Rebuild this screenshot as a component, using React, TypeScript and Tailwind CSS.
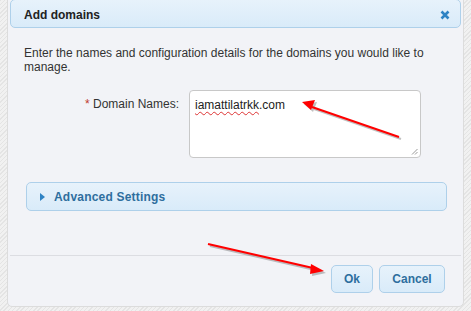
export default function App() {
  const font = { fontFamily: '"Liberation Sans", Arial, sans-serif' };
  return (
    <div
      className="relative w-[471px] h-[311px] overflow-hidden bg-[repeating-linear-gradient(135deg,#e4e4e4_0px,#e4e4e4_1px,#f1f1f1_1px,#f1f1f1_3px)]"
      style={font}
    >
      <div className="ml-[7px] mt-[-4px] w-[457px] h-[311px] flex flex-col rounded-b-[5px] border border-[#dcdcdc] bg-[#f2f3f7] p-[2px]">
        {/* title bar */}
        <div className="h-[29px] flex items-center justify-between rounded-[5px] border border-[#aed0ea] bg-gradient-to-b from-[#e7f2fb] to-[#d9ebf9] pl-[13px] pr-[10px] pt-[3px]">
          <span className="text-[12px] font-bold text-[#222]">Add domains</span>
          <svg width="10" height="10" viewBox="0 0 10 10">
            <path d="M1.5 1.5 L8.5 8.5 M8.5 1.5 L1.5 8.5" stroke="#2e83c4" strokeWidth="2.6" />
          </svg>
        </div>

        {/* body */}
        <div className="flex-1 flex flex-col px-[14px] pt-[18px]">
          <p className="w-[410px] text-[12px] leading-[14px] text-[#333]">
            Enter the names and configuration details for the domains you would like to manage.
          </p>

          <div className="mt-[16px] flex">
            <label className="w-[155px] pt-[5px] text-right text-[12px] text-[#333]">
              <span className="text-[#c0392b]">*</span> Domain Names:
            </label>
            <div className="relative ml-[10px] w-[232px] h-[68px] rounded-[4px] border border-[#c8c8c8] bg-white px-[5px] pt-[5px] text-[12px] text-[#222]">
              <span className="underline decoration-wavy decoration-[#d33] decoration-1 underline-offset-2">iamattilatrkk</span>.com
              <svg className="absolute right-[2px] bottom-[2px]" width="7" height="7" viewBox="0 0 7 7">
                <path d="M6.5 1 L1 6.5 M6.5 4 L4 6.5" stroke="#999" strokeWidth="1" />
              </svg>
            </div>
          </div>

          <div className="mt-[24px] ml-[2px] w-[421px] h-[29px] flex items-center rounded-[5px] border border-[#aed0ea] bg-gradient-to-b from-[#e7f2fb] to-[#d9ebf9] pl-[13px]">
            <svg width="5" height="8" viewBox="0 0 5 8" className="mr-[9px]">
              <path d="M0 0 L5 4 L0 8 Z" fill="#2e83c4" />
            </svg>
            <span className="text-[12px] font-bold tracking-[0.2px] text-[#2e6e9e]">Advanced Settings</span>
          </div>
        </div>

        {/* footer */}
        <div className="h-[49px] border-t border-[#dcdde2] flex justify-end items-start gap-[6px] pt-[9px] pr-[16px]">
          <button className="w-[42px] h-[28px] rounded-[5px] border border-[#aed0ea] bg-gradient-to-b from-[#e7f2fb] to-[#d9ebf9] text-[12px] font-bold text-[#2e6e9e]">
            Ok
          </button>
          <button className="w-[66px] h-[28px] rounded-[5px] border border-[#aed0ea] bg-gradient-to-b from-[#e7f2fb] to-[#d9ebf9] text-[12px] font-bold text-[#2e6e9e]">
            Cancel
          </button>
        </div>
      </div>

      {/* annotation arrows */}
      <svg className="absolute left-0 top-0" width="471" height="311" viewBox="0 0 471 311">
        <g transform="translate(2,2)" opacity="0.45">
          <path d="M399 137 L312 107" stroke="#777" strokeWidth="2" />
          <path d="M302 102 L315 100 L311 110 Z" fill="#777" />
          <path d="M208 244 L313 268" stroke="#777" strokeWidth="2" />
          <path d="M324 271 L311 264 L310 274 Z" fill="#777" />
        </g>
        <path d="M399 137 L312 107" stroke="#f00" strokeWidth="2" />
        <path d="M302 102 L315 100 L311 110 Z" fill="#f00" />
        <path d="M208 244 L313 268" stroke="#f00" strokeWidth="2" />
        <path d="M324 271 L311 264 L310 274 Z" fill="#f00" />
      </svg>
    </div>
  );
}
